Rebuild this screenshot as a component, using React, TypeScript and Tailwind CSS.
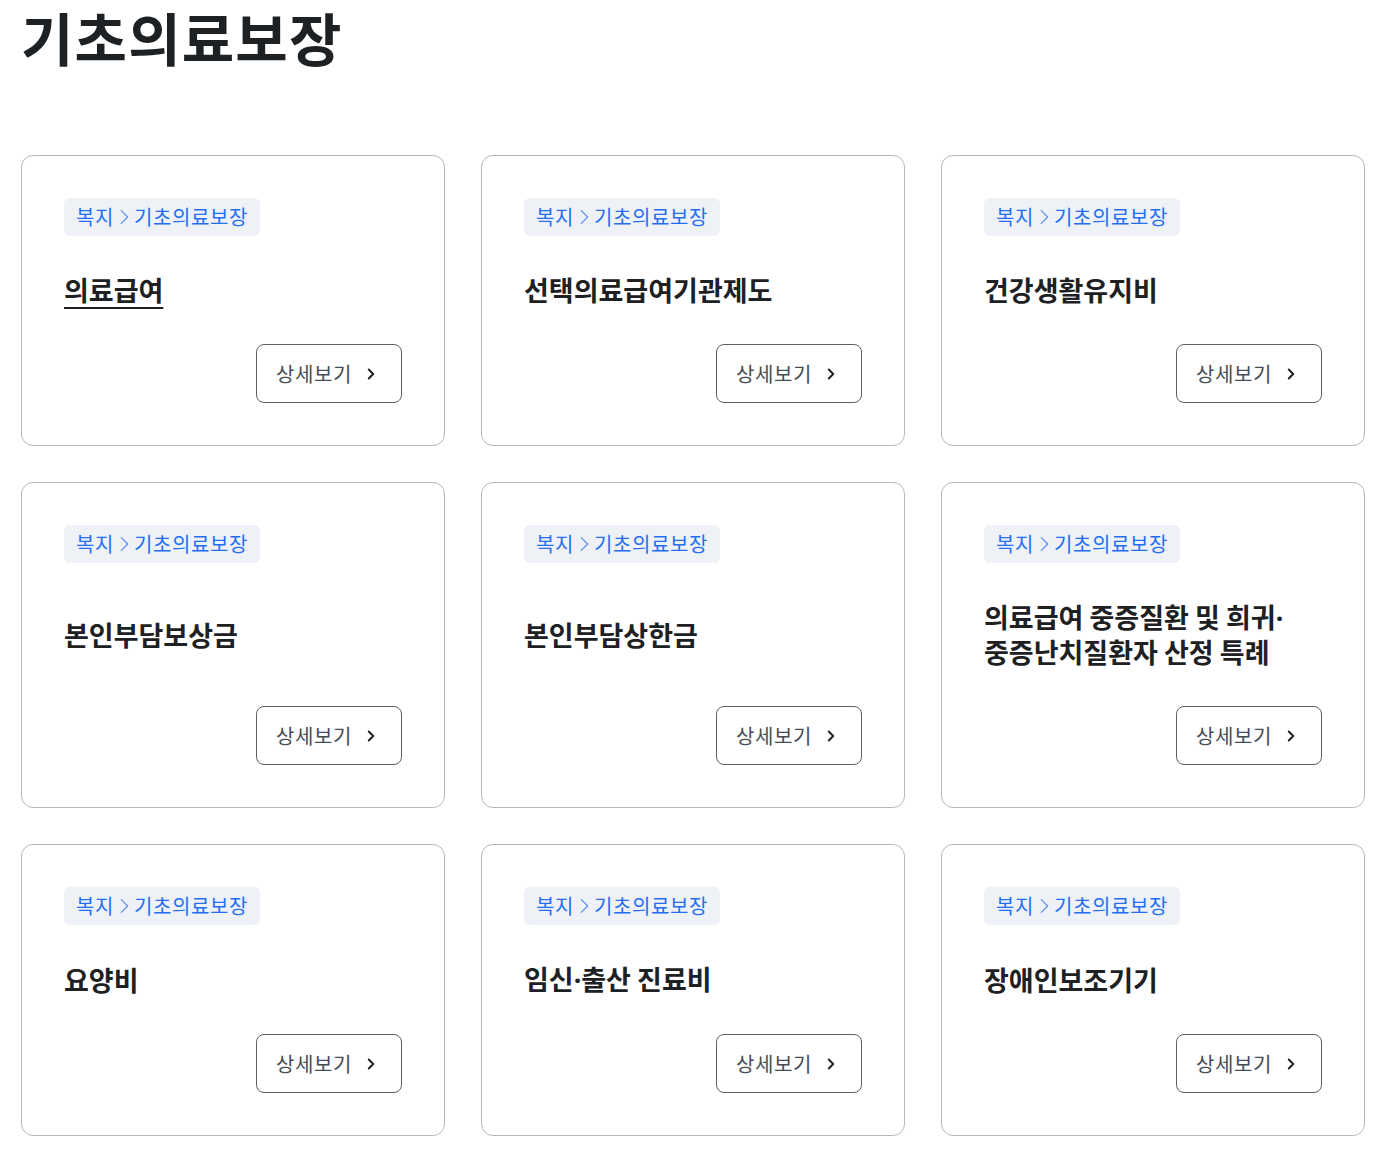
const items = [
  { title: "의료급여", hover: true },
  { title: "선택의료급여기관제도" },
  { title: "건강생활유지비" },
  { title: "본인부담보상금" },
  { title: "본인부담상한금" },
  { title: "의료급여 중증질환 및 희귀·\n중증난치질환자 산정 특례" },
  { title: "요양비" },
  { title: "임신·출산 진료비" },
  { title: "장애인보조기기" },
];

function Chevron({ className, d = "M9 6l6 6-6 6" }: { className?: string; d?: string }) {
  return (
    <svg viewBox="0 0 24 24" className={className} fill="none" stroke="currentColor" strokeLinecap="round" strokeLinejoin="round">
      <path d={d} />
    </svg>
  );
}

// the CJK font draws "·" full width; use a Latin font for the dot
function Title({ text }: { text: string }) {
  const parts = text.split("·");
  return (
    <>
      {parts.map((p, i) => (
        <span key={i}>
          {p}
          {i < parts.length - 1 && <span style={{ fontFamily: '"Noto Sans", sans-serif' }}>·</span>}
        </span>
      ))}
    </>
  );
}

function Card({ title, hover }: { title: string; hover?: boolean }) {
  return (
    <div className="flex flex-col rounded-[12px] border border-[#b1b8be] bg-white p-[42px]">
      <div className="flex h-[38px] items-center self-start rounded-[6px] bg-[#eef2f7] px-3 text-[20px] tracking-[0.03em] text-[#256ef4]">
        <span>복지</span>
        <Chevron d="M9 5l7 7-7 7" className="mx-[-1px] h-[22px] w-[22px] stroke-[1.3] text-[#5f8cf2]" />
        <span>기초의료보장</span>
      </div>
      <div className="my-[37px] flex flex-1 items-center">
        <h3
          className={
            "whitespace-pre-line text-[27px] font-bold leading-[34px] text-[#1e2124] " +
            (hover ? "underline decoration-2 underline-offset-[6px]" : "")
          }
        >
          <Title text={title} />
        </h3>
      </div>
      <button className="flex h-[59px] w-[146px] items-center self-end rounded-[8px] border border-[#58616a] bg-white pl-[19px] text-[20px] tracking-[0.03em] text-[#464c53]">
        상세보기
        <Chevron className="ml-[10px] h-[18px] w-[18px] stroke-[2.6] text-[#1e2124]" />
      </button>
    </div>
  );
}

export default function App() {
  return (
    <main
      className="min-h-screen bg-white px-[21px] pb-6"
      style={{ fontFamily: '"Noto Sans CJK KR", "Noto Sans", sans-serif' }}
    >
      <h1 className="text-[57px] font-bold leading-[72px] tracking-[0.02em] text-[#1e2124]">
        기초의료보장
      </h1>
      <div className="mt-[83px] grid w-[1344px] grid-cols-3 gap-x-9 gap-y-[36px]">
        {items.map((it, i) => (
          <Card key={i} title={it.title} hover={it.hover} />
        ))}
      </div>
    </main>
  );
}
